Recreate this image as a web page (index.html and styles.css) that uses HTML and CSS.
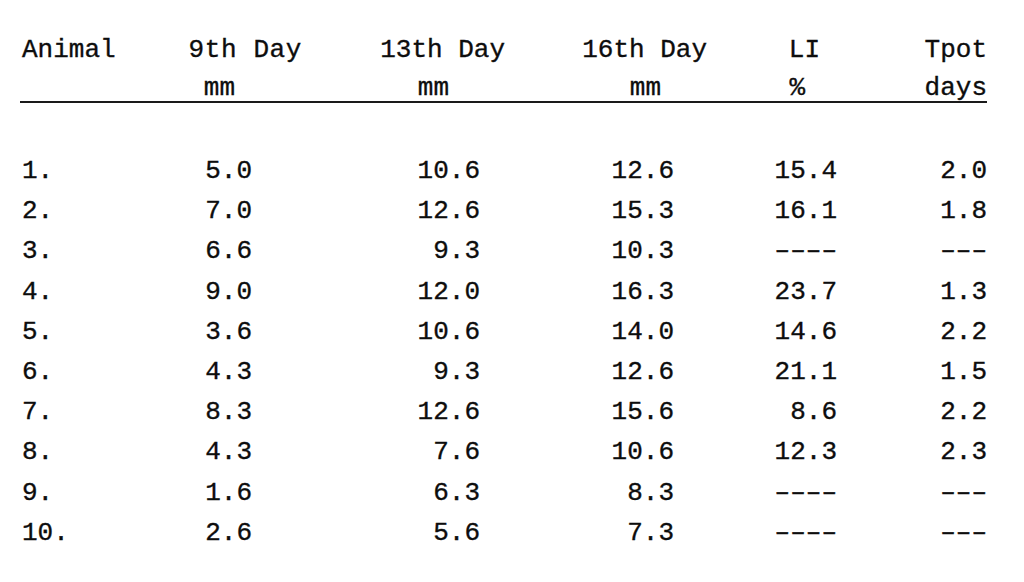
FILE: index.html
```html
<!DOCTYPE html>
<html lang="en">
<head>
<meta charset="utf-8">
<title>Tumour growth table</title>
<link rel="stylesheet" href="styles.css">
</head>
<body>
<div class="sheet">
  <div class="row head">
    <span>Animal</span><span>9th Day</span><span>13th Day</span><span>16th Day</span><span>LI</span><span>Tpot</span>
  </div>
  <div class="row units">
    <span></span><span>mm</span><span>mm</span><span>mm</span><span>%</span><span>days</span>
  </div>
  <div class="body">
    <div class="row data"><span>1.</span><span>5.0</span><span>10.6</span><span>12.6</span><span>15.4</span><span>2.0</span></div>
    <div class="row data"><span>2.</span><span>7.0</span><span>12.6</span><span>15.3</span><span>16.1</span><span>1.8</span></div>
    <div class="row data"><span>3.</span><span>6.6</span><span>9.3</span><span>10.3</span><span>––––</span><span>–––</span></div>
    <div class="row data"><span>4.</span><span>9.0</span><span>12.0</span><span>16.3</span><span>23.7</span><span>1.3</span></div>
    <div class="row data"><span>5.</span><span>3.6</span><span>10.6</span><span>14.0</span><span>14.6</span><span>2.2</span></div>
    <div class="row data"><span>6.</span><span>4.3</span><span>9.3</span><span>12.6</span><span>21.1</span><span>1.5</span></div>
    <div class="row data"><span>7.</span><span>8.3</span><span>12.6</span><span>15.6</span><span>8.6</span><span>2.2</span></div>
    <div class="row data"><span>8.</span><span>4.3</span><span>7.6</span><span>10.6</span><span>12.3</span><span>2.3</span></div>
    <div class="row data"><span>9.</span><span>1.6</span><span>6.3</span><span>8.3</span><span>––––</span><span>–––</span></div>
    <div class="row data"><span>10.</span><span>2.6</span><span>5.6</span><span>7.3</span><span>––––</span><span>–––</span></div>
  </div>
</div>
</body>
</html>
```

FILE: styles.css
```css
html, body {
  margin: 0;
  padding: 0;
  background: #ffffff;
}

body {
  width: 1024px;
  height: 582px;
  overflow: hidden;
  font-family: "Courier New", "Liberation Mono", monospace;
  font-size: 26px;
  color: #0d0d0d;
  -webkit-text-stroke: 0.35px #0d0d0d;
}

.sheet {
  padding: 37px 0 0 20px;
  width: 967px;
}

.row {
  display: grid;
  grid-template-columns: 122px 160px 203px 202px 130px 150px;
  white-space: pre;
}

.row span {
  text-align: right;
}

.row span:first-child {
  text-align: left;
  padding-left: 2px;
}

.head {
  line-height: 26px;
  margin-bottom: 12px;
}

.head span:nth-child(2) {
  letter-spacing: 0.6px;
}

.head span:nth-child(5) {
  padding-right: 17px;
}

.units {
  line-height: 26px;
  border-bottom: 2px solid #1a1a1a;
}

.units span:nth-child(2) { padding-right: 67px; }
.units span:nth-child(3) { padding-right: 56px; }
.units span:nth-child(4) { padding-right: 46px; }
.units span:nth-child(5) { padding-right: 32px; }

.body {
  padding-top: 48px;
}

.data {
  line-height: 40.2px;
}

.data span:nth-child(2) { padding-right: 50px; }
.data span:nth-child(3) { padding-right: 25px; }
.data span:nth-child(4) { padding-right: 33px; }
```
